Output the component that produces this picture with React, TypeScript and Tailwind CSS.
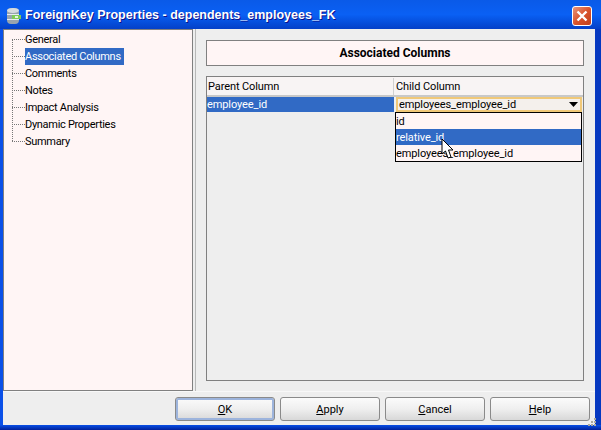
import React from 'react';

const treeItems = ['General', 'Associated Columns', 'Comments', 'Notes', 'Impact Analysis', 'Dynamic Properties', 'Summary'];

const TitleIcon = () => (
  <svg width="15" height="18" viewBox="0 0 15 18" className="shrink-0">
    <rect x="1" y="1" width="12" height="16" rx="4" fill="#98a4ae" />
    <ellipse cx="7" cy="3.5" rx="6" ry="2.5" fill="#d5dbe0" />
    <rect x="1" y="7" width="12" height="1" fill="#e8ecef" />
    <rect x="1" y="12" width="12" height="1" fill="#e8ecef" />
    <rect x="6" y="8" width="9" height="4" fill="#7ecb5a" />
    <rect x="9" y="9" width="3" height="2" fill="#e6f7dc" />
  </svg>
);

const CloseButton = () => (
  <div className="flex h-[20px] w-[20px] items-center justify-center rounded-[3px] border border-white bg-gradient-to-br from-[#e8957a] via-[#d9532c] to-[#c2401c]">
    <svg width="12" height="12" viewBox="0 0 12 12">
      <path d="M1.5 1.5 L10.5 10.5 M10.5 1.5 L1.5 10.5" stroke="#ffffff" strokeWidth="2.4" />
    </svg>
  </div>
);

const Cursor = () => (
  <svg width="16" height="24" viewBox="0 0 16 24" className="absolute left-[441px] top-[138px]">
    <path d="M1 1 L1 16 L4.5 13 L7 20 L10 19 L7.5 12 L12 12 Z" fill="#ffffff" stroke="#000000" strokeWidth="1" />
  </svg>
);

const Grip = () => (
  <svg width="9" height="9" viewBox="0 0 9 9" className="absolute bottom-[4px] right-[5px]">
    <path
      d="M7 1h2v2h-2z M4 4h2v2h-2z M7 4h2v2h-2z M1 7h2v2h-2z M4 7h2v2h-2z M7 7h2v2h-2z"
      fill="#a8a8a0"
    />
  </svg>
);

const DialogButton = ({ label, hotkey, isDefault }: { label: string; hotkey: string; isDefault?: boolean }) => (
  <button
    className={`h-[24px] w-[100px] rounded-[3px] border border-[#8a8a8a] bg-gradient-to-b from-[#fbfbfb] via-[#efefef] to-[#d8d8d8] text-[11px] text-black ${
      isDefault ? 'shadow-[inset_0_0_0_2px_#9db4dc]' : ''
    }`}
  >
    <span className="underline">{hotkey}</span>
    {label}
  </button>
);

export default function App() {
  return (
    <div className="relative flex h-[430px] w-[601px] flex-col bg-gradient-to-r from-[#0a50e8] via-[#0a50e8] to-[#0638c0] font-['Roboto',sans-serif] text-[11px] leading-none text-black">
      {/* title bar */}
      <div className="flex h-[29px] items-center bg-gradient-to-b from-[#0a5ae8] via-[#0a60f4] to-[#0440c8] pl-[6px] pr-[9px] pt-[2px]">
        <TitleIcon />
        <span className="ml-[4px] font-['Liberation_Sans',sans-serif] text-[12.5px] font-bold text-white [text-shadow:1px_1px_#0f1089]">
          ForeignKey Properties - dependents_employees_FK
        </span>
        <div className="ml-auto">
          <CloseButton />
        </div>
      </div>

      {/* dialog body */}
      <div className="ml-[3px] mr-[6px] flex flex-1 flex-col bg-[#eeeeee]">
        <div className="flex h-[362px]">
          <div className="relative w-[190px] border border-[#808080] bg-[#fff5f5] pl-[8px] pt-[1px] tracking-[-0.3px]">
            <span className="absolute left-[8px] top-[9px] h-[102px] border-l border-dotted border-[#777777]" />
            {treeItems.map((item) => (
              <div key={item} className="flex h-[17px] items-center">
                <span className="w-[13px] border-t border-dotted border-[#777777]" />
                <span className={`flex h-[17px] items-center pr-[3px] ${item === 'Associated Columns' ? 'bg-[#316ac5] text-white' : ''}`}>
                  {item}
                </span>
              </div>
            ))}
          </div>

          <div className="ml-[2px] flex flex-1 flex-col border-l border-[#b8b8b8] pl-[10px] pr-[11px] pt-[11px]">
            <div className="flex h-[26px] items-center justify-center border border-[#808080] bg-[#fff5f5] text-[12px] font-bold">
              Associated Columns
            </div>
            <div className="mt-[10px] h-[305px] border border-[#808080] tracking-[-0.1px]">
              <div className="flex h-[20px] border-b-2 border-[#c8c8c8] bg-[#f8f4f4] pt-[1px]">
                <div className="flex w-[187px] items-center border-r border-[#d0d0d0] pl-[1px]">Parent Column</div>
                <div className="flex flex-1 items-center pl-[2px]">Child Column</div>
              </div>
              <div className="flex h-[15px]">
                <div className="flex w-[187px] items-center bg-[#316ac5] text-white">employee_id</div>
                <div className="ml-[2px] mr-[1px] flex flex-1 items-center justify-between border-2 border-[#f0c878] bg-[#f4f0ec] pl-[1px] pr-[2px]">
                  <span>employees_employee_id</span>
                  <svg width="9" height="5" viewBox="0 0 9 5">
                    <path d="M0 0 H9 L4.5 5 Z" fill="#000000" />
                  </svg>
                </div>
              </div>
              <div className="ml-[188px] mr-[1px] border border-black bg-[#fff5f5]">
                <div className="flex h-[16px] items-center">id</div>
                <div className="flex h-[16px] items-center bg-[#316ac5] text-white">relative_id</div>
                <div className="flex h-[16px] items-center">employees_employee_id</div>
              </div>
            </div>
          </div>
        </div>

        {/* button row */}
        <div className="flex justify-end gap-[5px] border-t border-[#f8f8f8] pr-[5px] pt-[5px]">
          <DialogButton hotkey="O" label="K" isDefault />
          <DialogButton hotkey="A" label="pply" />
          <DialogButton hotkey="C" label="ancel" />
          <DialogButton hotkey="H" label="elp" />
        </div>
      </div>
      <div className="h-[5px] bg-gradient-to-b from-[#0a50e8] to-[#02209a]" />
      <Cursor />
      <Grip />
    </div>
  );
}
